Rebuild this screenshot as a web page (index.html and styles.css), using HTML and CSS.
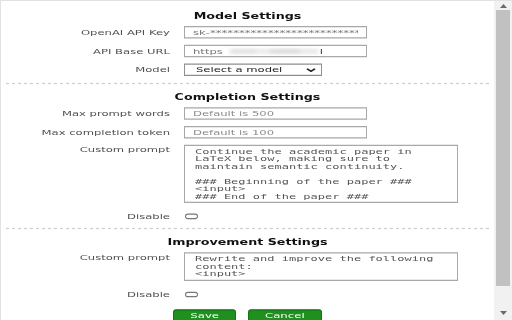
FILE: index.html
```html
<!DOCTYPE html>
<html lang="en">
<head>
<meta charset="utf-8">
<title>Settings</title>
<link rel="stylesheet" href="styles.css">
</head>
<body>
<div class="window">
  <main class="page">
    <section class="section section-model">
      <h2 class="title">Model Settings</h2>
      <div class="row">
        <label class="label">OpenAI API Key</label>
        <input class="field field-wide" type="text" value="sk-**************************">
      </div>
      <div class="row">
        <label class="label">API Base URL</label>
        <div class="field field-wide field-url"><span>https</span><span class="blurred"></span><span class="url-end">l</span></div>
      </div>
      <div class="row">
        <label class="label">Model</label>
        <div class="select"><span>Select a model</span><svg class="chevron" width="10" height="7" viewBox="0 0 10 7"><path d="M1 1.5 L5 5.5 L9 1.5" fill="none" stroke="#222" stroke-width="2"/></svg></div>
      </div>
    </section>
    <div class="divider"></div>
    <section class="section section-completion">
      <h2 class="title">Completion Settings</h2>
      <div class="row">
        <label class="label">Max prompt words</label>
        <input class="field field-wide" type="text" placeholder="Default is 500">
      </div>
      <div class="row">
        <label class="label">Max completion token</label>
        <input class="field field-wide" type="text" placeholder="Default is 100">
      </div>
      <div class="row row-text">
        <label class="label">Custom prompt</label>
        <textarea class="area area-tall" readonly>Continue the academic paper in LaTeX below, making sure to maintain semantic continuity.

### Beginning of the paper ###
&lt;input&gt;
### End of the paper ###</textarea>
      </div>
      <div class="row row-check">
        <label class="label">Disable</label>
        <input class="check" type="checkbox">
      </div>
    </section>
    <div class="divider"></div>
    <section class="section section-last">
      <h2 class="title">Improvement Settings</h2>
      <div class="row row-text">
        <label class="label">Custom prompt</label>
        <textarea class="area area-short" readonly>Rewrite and improve the following content:
&lt;input&gt;</textarea>
      </div>
      <div class="row row-check">
        <label class="label">Disable</label>
        <input class="check" type="checkbox">
      </div>
    </section>
    <div class="actions">
      <button class="btn" type="button">Save</button>
      <button class="btn" type="button">Cancel</button>
    </div>
  </main>
  <aside class="scrollbar">
    <div class="sb-arrow"><svg width="7" height="4" viewBox="0 0 7 4"><path d="M0 4 L3.5 0 L7 4 Z" fill="#6a6a6a"/></svg></div>
    <div class="sb-thumb"></div>
    <div class="sb-space"></div>
    <div class="sb-arrow sb-arrow-down"><svg width="7" height="4" viewBox="0 0 7 4"><path d="M0 0 L3.5 4 L7 0 Z" fill="#6a6a6a"/></svg></div>
  </aside>
</div>
</body>
</html>
```
FILE: styles.css
```css
html, body {
  margin: 0;
  padding: 0;
  height: 320px;
  overflow: hidden;
  background: #fff;
}

.window {
  display: flex;
  align-items: flex-start;
  height: 320px;
  box-sizing: border-box;
  border-top: 1px solid #e2e2e2;
  border-left: 1px solid #e2e2e2;
  overflow: hidden;
}

/* the captured popup is squeezed vertically */
.page {
  flex: none;
  width: 493px;
  height: 511px;
  box-sizing: border-box;
  padding-top: 3px;
  transform: scaleY(0.625);
  transform-origin: 0 0;
  font-family: "DejaVu Sans", Verdana, sans-serif;
  font-size: 11.6px;
  color: #505050;
}

.section {
  display: flex;
  flex-direction: column;
  gap: 10px;
  padding: 13px 0 8px;
}

.section-model {
  padding-bottom: 11px;
}

.title {
  margin: 0 0 -2px;
  font-size: 12.7px;
  font-weight: bold;
  line-height: 16px;
  text-align: center;
  color: #111;
}

.row {
  display: grid;
  grid-template-columns: 169px 1fr;
  column-gap: 14px;
  align-items: start;
}

.row-check {
  margin-top: 2px;
}

.label {
  text-align: right;
  line-height: 20px;
  white-space: nowrap;
}

.row-text .label {
  line-height: 17px;
}

.field {
  height: 20px;
  box-sizing: border-box;
  margin: 0;
  border: solid #a8a8a8;
  border-width: 2px 1px;
  border-radius: 0;
  padding: 0 8px;
  font: inherit;
  color: #777;
  background: #fff;
  outline: none;
}

.field::placeholder {
  color: #8c8c8c;
}

.field-wide {
  width: 183px;
}

.field-url {
  display: flex;
  align-items: center;
  overflow: hidden;
}

.blurred {
  width: 88px;
  height: 9px;
  margin-left: 7px;
  background: linear-gradient(90deg, #e6e6e6 0 30%, #eeeeee 30% 45%, #e0e0e0 45% 80%, #ebebeb 80%);
  filter: blur(2px);
}

.url-end {
  margin-left: 2px;
  color: #333;
}

.select {
  width: 138px;
  height: 20px;
  box-sizing: border-box;
  border: solid #8f8f8f;
  border-width: 2px 1px;
  padding: 0 5px 0 11px;
  display: flex;
  align-items: center;
  justify-content: space-between;
  color: #222;
  background: #fff;
}

.chevron {
  flex: none;
}

.area {
  box-sizing: border-box;
  width: 274px;
  margin: 0;
  border: solid #a8a8a8;
  border-width: 2px 1px;
  border-radius: 0;
  padding: 2px 6px 2px 10px;
  font-family: "DejaVu Sans Mono", "Liberation Mono", monospace;
  font-size: 12px;
  line-height: 12px;
  color: #555;
  background: #fff;
  resize: none;
  overflow: hidden;
  outline: none;
}

.area-tall {
  height: 93px;
}

.area-short {
  height: 46px;
}

.check {
  appearance: none;
  -webkit-appearance: none;
  width: 13px;
  height: 9px;
  margin: 5px 0 0 1px;
  box-sizing: border-box;
  border: solid #777;
  border-width: 2px 1px;
  border-radius: 3px / 5px;
  background: #fff;
}

.divider {
  height: 2px;
  margin: 0 4px 0 5px;
  background: repeating-linear-gradient(90deg, #cfcfcf 0 3px, transparent 3px 6px);
}

.actions {
  display: flex;
  justify-content: center;
  align-items: flex-start;
  gap: 12px;
  padding-top: 5px;
}

.btn {
  height: 26px;
  margin: 0;
  padding: 0 16px 6px;
  border: solid #157515;
  border-width: 2px 1px;
  border-radius: 3px / 5px;
  background: #1f8f1f;
  color: #fff;
  font-family: "DejaVu Sans", Verdana, sans-serif;
  font-size: 11.7px;
  line-height: 16px;
}

.scrollbar {
  flex: none;
  width: 18px;
  height: 319px;
  background: #f1f1f1;
  display: flex;
  flex-direction: column;
  align-items: center;
}

.sb-arrow {
  height: 9px;
  display: flex;
  align-items: center;
  justify-content: center;
}

.sb-arrow-down {
  height: 14px;
}

.sb-thumb {
  width: 14px;
  height: 276px;
  background: #c1c1c1;
}

.sb-space {
  flex: 1;
}
```
